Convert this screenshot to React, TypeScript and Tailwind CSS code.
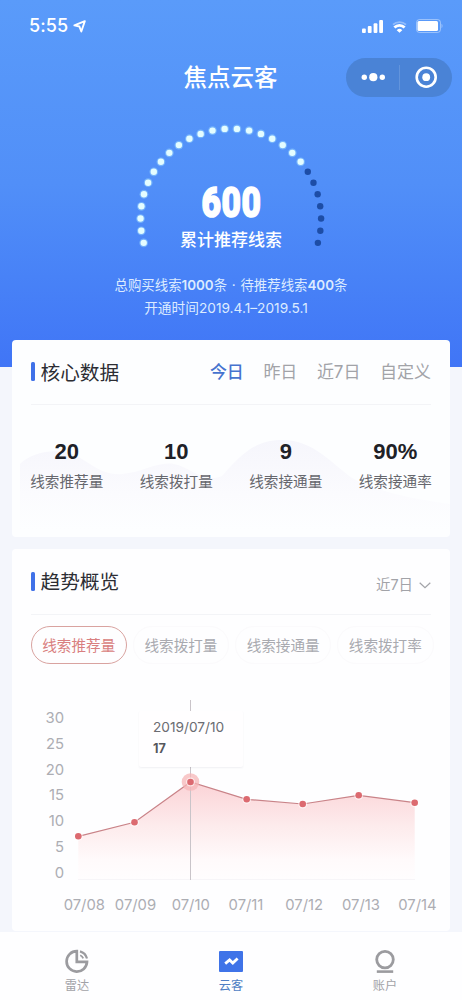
import { useState } from "react";
import clsx from "clsx";

const GAUGE_TOTAL = 28;
const GAUGE_ACTIVE = 21;

const ranges = ["今日", "昨日", "近7日", "自定义"];

const stats = [
  { label: "线索推荐量", value: "20" },
  { label: "线索拨打量", value: "10" },
  { label: "线索接通量", value: "9" },
  { label: "线索接通率", value: "90%" },
];

const metrics = ["线索推荐量", "线索拨打量", "线索接通量", "线索拨打率"];

const points = [
  { date: "07/08", x: 66.3, y: 146.3, labelX: 72.3 },
  { date: "07/09", x: 122.5, y: 132.3, labelX: 123.5 },
  { date: "07/10", x: 178.5, y: 92, labelX: 178.7 },
  { date: "07/11", x: 234.7, y: 109.3, labelX: 234 },
  { date: "07/12", x: 290.7, y: 114, labelX: 292.2 },
  { date: "07/13", x: 346.7, y: 105.3, labelX: 349 },
  { date: "07/14", x: 402.7, y: 112.7, labelX: 405.5 },
];

function StatusBar() {
  return (
    <div className="flex h-[52px] items-center justify-between pl-[29px] pr-[19px] text-white">
      <div className="flex items-center gap-[5px]">
        <span className="font-['Inter'] text-[18px] font-medium leading-none tracking-[0.1px]">5:55</span>
        <svg width="13" height="13" viewBox="0 0 13 13" fill="none" stroke="currentColor" strokeWidth="1.9" strokeLinejoin="round">
          <path d="M11.8 1.2 1.4 5.4l5 1.1 1.9 5z" />
        </svg>
      </div>
      <div className="flex items-center gap-[9px]">
        <svg width="21" height="13" viewBox="0 0 21 13" fill="currentColor">
          <rect x="0" y="8.5" width="3.8" height="4.5" rx="1" />
          <rect x="5.8" y="6" width="3.8" height="7" rx="1" />
          <rect x="11.6" y="3.2" width="3.8" height="9.8" rx="1" />
          <rect x="17.2" y="0" width="3.8" height="13" rx="1" />
        </svg>
        <svg width="15" height="13" viewBox="0 0 15 13" fill="none" stroke="currentColor">
          <path d="M1 4.6a9.5 9.5 0 0 1 13 0" strokeWidth="1.8" opacity="0.35" />
          <path d="M2.4 7.4a7.2 7.2 0 0 1 10.2 0" strokeWidth="2.8" />
          <path d="M7.5 12.8 4.7 10.2a4 4 0 0 1 5.6 0z" fill="currentColor" stroke="none" />
        </svg>
        <svg width="27" height="14" viewBox="0 0 27 14">
          <rect x="0.5" y="0.5" width="24" height="13" rx="3" fill="none" stroke="#fff" opacity="0.4" />
          <rect x="1.5" y="2" width="20.5" height="10" rx="1.5" fill="#fff" />
          <path d="M25.5 4.8c1.4.6 1.4 3.8 0 4.4z" fill="#fff" opacity="0.4" />
        </svg>
      </div>
    </div>
  );
}

function Gauge() {
  const dots = Array.from({ length: GAUGE_TOTAL }, (_, i) => {
    const angle = ((90 + (GAUGE_TOTAL / 2 - 0.5 - i) * 7.8) * Math.PI) / 180;
    return { x: 99.8 + 90.3 * Math.cos(angle), y: 99 - 90.3 * Math.sin(angle), active: i < GAUGE_ACTIVE };
  });

  return (
    <div className="relative mx-auto h-[140px] w-[200px]">
      <svg width="200" height="140" viewBox="0 0 200 140">
        {dots.map((dot, i) => (
          <g key={i}>
            {dot.active && <circle cx={dot.x} cy={dot.y} r="4.4" fill="#8fd0ff" opacity="0.55" />}
            <circle cx={dot.x} cy={dot.y} r="3.2" fill={dot.active ? "#e4fdff" : "#1d4da6"} />
          </g>
        ))}
      </svg>
      <div className="absolute inset-x-0 top-[61px] flex flex-col items-center text-white">
        <span className="scale-x-[0.8] font-['Roboto'] text-[42px] font-black leading-[44px] tracking-[0.6px] [-webkit-text-stroke:1.5px_white]">
          600
        </span>
        <span className="mt-[3px] text-[17px] font-medium leading-[24px]">累计推荐线索</span>
      </div>
    </div>
  );
}

function Header() {
  return (
    <header className="h-[367px] bg-linear-to-b from-[#5a9bfa] via-[#518ff8] to-[#4075f6]">
      <StatusBar />
      <div className="grid h-[50px] grid-cols-[1fr_auto_1fr] items-center pr-[10px]">
        <span />
        <h1 className="pl-[9px] pt-[2px] text-[23.5px] font-medium leading-none text-white">焦点云客</h1>
        <svg className="justify-self-end" width="106" height="39" viewBox="0 0 106 39">
          <rect width="106" height="39" rx="19.5" fill="#4a83d6" />
          <circle cx="18.3" cy="19.2" r="2.7" fill="#fff" />
          <circle cx="27.3" cy="19.2" r="4.1" fill="#fff" />
          <circle cx="36.3" cy="19.2" r="2.7" fill="#fff" />
          <path d="M53.5 7v25" stroke="#6294dc" />
          <circle cx="80.2" cy="19.2" r="9.5" fill="none" stroke="#fff" strokeWidth="2.6" />
          <circle cx="80.2" cy="19.2" r="3.9" fill="#fff" />
        </svg>
      </div>
      <div className="pt-[18px]">
        <Gauge />
      </div>
      <div className="mt-[14px] flex flex-col items-center text-[13.4px] leading-[23px] text-[#dcebff]">
        <p className="whitespace-pre">
          总购买线索<b className="font-semibold">1000</b>条<span className="px-[1px]"> · </span>待推荐线索
          <b className="font-semibold">400</b>条
        </p>
        <p className="pr-[10px] text-[13.7px]">开通时间2019.4.1–2019.5.1</p>
      </div>
    </header>
  );
}

function CardTitle({ children }: { children: string }) {
  return (
    <h2 className="flex items-center gap-[5.5px] text-[19.7px] leading-none text-[#2c2d33]">
      <span className="h-[19px] w-[4px] rounded-[1.5px] bg-[#4071e8]" />
      <span className="pt-[3px]">{children}</span>
    </h2>
  );
}

function CoreData() {
  const [range, setRange] = useState("今日");

  return (
    <section className="relative mx-[12px] -mt-[27px] h-[197px] rounded-[4px] bg-[#fdfeff]">
      <svg className="absolute inset-0" width="438" height="197" viewBox="0 0 438 197">
        <defs>
          <linearGradient id="wave" x1="0" y1="0" x2="0" y2="1">
            <stop offset="0" stopColor="#f6f6fc" />
            <stop offset="0.6" stopColor="#fbfbfe" />
            <stop offset="1" stopColor="#fdfeff" />
          </linearGradient>
        </defs>
        <path
          d="M8 124C20 112 44 108 60 114S88 136 110 134S146 121 162 124S192 144 210 136C228 116 242 100 270 100C302 100 320 124 340 138C370 154 410 160 438 164V190H8Z"
          fill="url(#wave)"
        />
      </svg>
      <div className="relative mx-[19px] flex h-[65px] items-center justify-between border-b border-[#f3f4f7]">
        <CardTitle>核心数据</CardTitle>
        <div className="flex gap-[19.5px] pt-[1px] text-[17px] leading-none">
          {ranges.map((item) => (
            <button
              key={item}
              type="button"
              className={clsx("whitespace-nowrap", item === range ? "font-medium text-[#4673cf]" : "text-[#a2a3a8]")}
              onClick={() => setRange(item)}
            >
              {item}
            </button>
          ))}
        </div>
      </div>
      <div className="relative grid grid-cols-4 pt-[34px]">
        {stats.map((stat) => (
          <div key={stat.label} className="flex flex-col items-center">
            <span className="font-['Liberation_Sans'] text-[22px] font-bold leading-[26px] text-[#202127]">
              {stat.value}
            </span>
            <span className="mt-[5px] text-[14.6px] leading-[24px] text-[#66676d]">{stat.label}</span>
          </div>
        ))}
      </div>
    </section>
  );
}

function TrendChart() {
  const line = points.map((p) => `${p.x},${p.y}`).join(" ");

  return (
    <div className="relative">
      <svg width="438" height="240" viewBox="0 0 438 240">
        <defs>
          <linearGradient id="area" x1="0" y1="0" x2="0" y2="1">
            <stop offset="0" stopColor="#fbd3d6" />
            <stop offset="0.45" stopColor="#fdebec" />
            <stop offset="0.8" stopColor="#fffafb" />
            <stop offset="1" stopColor="#fffdfe" />
          </linearGradient>
        </defs>
        <g fontFamily="Inter" fontSize="14.8" fill="#acadb3">
          {[30, 25, 20, 15, 10, 5, 0].map((tick, i) => (
            <text key={tick} x="52" y={32.6 + i * 25.95} textAnchor="end">
              {tick}
            </text>
          ))}
          {points.map((p) => (
            <text key={p.date} x={p.labelX} y="220.3" textAnchor="middle">
              {p.date}
            </text>
          ))}
        </g>
        <polygon points={`66.3,189.5 ${line} 402.7,189.5`} fill="url(#area)" />
        <path d="M66 189.5h337" stroke="#f7f5f8" />
        <path d="M178.5 10v180" stroke="#c9c4c9" />
        <polyline points={line} fill="none" stroke="#c98388" strokeWidth="1.2" />
        <circle cx="178.5" cy="92" r="8.8" fill="#f5b5b7" opacity="0.75" />
        {points.map((p) => (
          <g key={p.date}>
            <circle cx={p.x} cy={p.y} r="4.5" fill="#fff" opacity="0.6" />
            <circle cx={p.x} cy={p.y} r="3.3" fill="#dc6a70" />
          </g>
        ))}
      </svg>
      <div className="absolute left-[127px] top-[21px] h-[56px] w-[104px] rounded-[2px] bg-[#fffeff] pl-[14px] pt-[5px] font-['Inter'] shadow-[0_1px_2px_rgba(60,60,90,0.07)]">
        <p className="text-[13.7px] leading-[22px] text-[#6b6c72]">2019/07/10</p>
        <p className="text-[12.7px] font-bold leading-[22px] text-[#56575d]">17</p>
      </div>
    </div>
  );
}

function Trend() {
  const [metric, setMetric] = useState("线索推荐量");

  return (
    <section className="mx-[12px] mt-[12px] h-[382px] rounded-[4px] bg-[#fefeff]">
      <div className="mx-[19px] flex h-[66px] items-center justify-between border-b border-[#f3f4f7]">
        <CardTitle>趋势概览</CardTitle>
        <button type="button" className="flex items-center gap-[6px] pt-[8px] text-[14.4px] leading-none text-[#a2a3a8]">
          近7日
          <svg width="12" height="7" viewBox="0 0 12 7" fill="none" stroke="currentColor" strokeWidth="1.2">
            <path d="m.7.8 5.3 5 5.3-5" />
          </svg>
        </button>
      </div>
      <div className="flex gap-[5.7px] pl-[18.5px] pt-[11px]">
        {metrics.map((item) => (
          <button
            key={item}
            type="button"
            className={clsx(
              "h-[38px] w-[96.5px] shrink-0 rounded-full border pt-[2px] text-[14.6px] leading-none whitespace-nowrap",
              item === metric ? "border-[#d9a3a0] text-[#d97f80]" : "border-[#fbfafc] text-[#a9aab0]"
            )}
            onClick={() => setMetric(item)}
          >
            {item}
          </button>
        ))}
      </div>
      <div className="pt-[26px]">
        <TrendChart />
      </div>
    </section>
  );
}

function TabBar() {
  return (
    <nav className="mt-[1px] grid h-[68px] grid-cols-3 bg-[#fefeff] pt-[17px] text-[12.2px] leading-[18px] text-[#a2a2a7]">
      <a className="flex flex-col items-center gap-[4px]">
        <svg width="24" height="24" viewBox="0 0 24 24" fill="none" stroke="#9b9b9f" strokeWidth="2.7">
          <path d="M11.8 2.2A10.2 10.2 0 1 0 22 12.9H11.8z" />
          <path d="M15 2.4a10 10 0 0 1 7 7.2" strokeWidth="2.2" />
          <path d="M15.2 6.2a5.6 5.6 0 0 1 3 3.2" strokeWidth="1.8" />
        </svg>
        雷达
      </a>
      <a className="flex flex-col items-center gap-[4px] text-[#4f7fc4]">
        <svg width="24" height="24" viewBox="0 0 24 24">
          <rect y="2" width="24" height="21" rx="1" fill="#3f73e8" />
          <path d="m6.2 14.6 4.4-3.7 3.2 3.1 4.8-4.6" fill="none" stroke="#fff" strokeWidth="2.8" />
        </svg>
        云客
      </a>
      <a className="flex flex-col items-center gap-[4px]">
        <svg width="24" height="24" viewBox="0 0 24 24" fill="none" stroke="#9b9b9f">
          <circle cx="12" cy="10.6" r="8.3" strokeWidth="2.8" />
          <path d="M3.8 22.6h16.4" strokeWidth="2.6" />
        </svg>
        账户
      </a>
    </nav>
  );
}

export default function App() {
  return (
    <div className="h-[1000px] w-[462px] overflow-hidden bg-[#f4f6fc] font-['Inter','Noto_Sans_CJK_SC',sans-serif]">
      <Header />
      <CoreData />
      <Trend />
      <TabBar />
    </div>
  );
}
